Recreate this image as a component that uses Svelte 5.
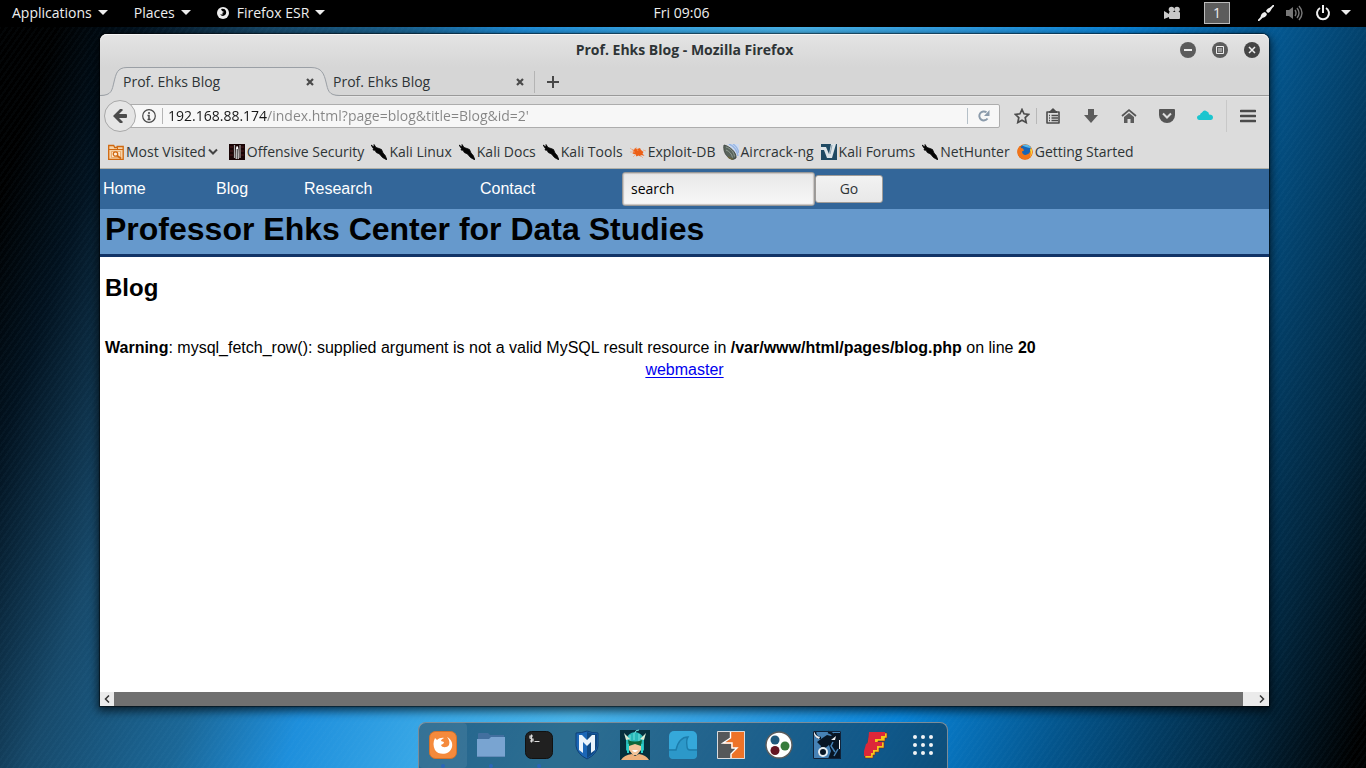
<script>
  let address = $state("192.168.88.174/index.html?page=blog&title=Blog&id=2'");
  let query = $state('search');

  const bookmarks = [
    { label: 'Most Visited', icon: 'folder', menu: true },
    { label: 'Offensive Security', icon: 'offsec' },
    { label: 'Kali Linux', icon: 'kali' },
    { label: 'Kali Docs', icon: 'kali' },
    { label: 'Kali Tools', icon: 'kali' },
    { label: 'Exploit-DB', icon: 'exploit' },
    { label: 'Aircrack-ng', icon: 'aircrack' },
    { label: 'Kali Forums', icon: 'forums' },
    { label: 'NetHunter', icon: 'kali' },
    { label: 'Getting Started', icon: 'firefox' }
  ];

  const pages = ['Home', 'Blog', 'Research', 'Contact'];

  const apps = [
    { id: 'firefox', name: 'Firefox ESR', running: true, active: true },
    { id: 'files', name: 'Files', running: true },
    { id: 'terminal', name: 'Terminal', running: true },
    { id: 'metasploit', name: 'Metasploit' },
    { id: 'armitage', name: 'Armitage' },
    { id: 'wireshark', name: 'Wireshark' },
    { id: 'burp', name: 'Burp Suite' },
    { id: 'maltego', name: 'Maltego' },
    { id: 'beef', name: 'BeEF' },
    { id: 'faraday', name: 'Faraday' },
    { id: 'grid', name: 'Show Applications' }
  ];
</script>

{#snippet caret()}
  <svg width="10" height="5" viewBox="0 0 10 5" aria-hidden="true"><path d="M0 0h10L5 5z" fill="#eee" /></svg>
{/snippet}

{#snippet closeMark()}
  <svg width="8" height="8" viewBox="0 0 8 8" aria-hidden="true"><path d="M1 1l6 6M7 1L1 7" stroke="#4a4a4a" stroke-width="2.2" /></svg>
{/snippet}

{#snippet bookmarkIcon(kind)}
  <svg width="16" height="16" viewBox="0 0 16 16" aria-hidden="true">
    {#if kind === 'folder'}
      <path d="M.7 15.3V1.500h5l1 2h2.500v-1h6v12.800z" fill="#f6d3a8" stroke="#d0680f" stroke-width="1.300" />
      <path d="M1 5.500h14M9.500 3.500v2" stroke="#d0680f" />
      <path d="M3.500 13.500v-6h9v6z" fill="#fae4c8" stroke="#e08a3a" stroke-width=".6" />
      <circle cx="7.500" cy="10" r="2.200" fill="#fff0dd" stroke="#d0680f" stroke-width="1.300" />
      <path d="M9 11.500l4 3" stroke="#d0680f" stroke-width="1.600" />
    {:else if kind === 'offsec'}
      <path d="M0 0h16v16H0z" fill="#190506" />
      <path d="M1 3h3M1 7h3M1 11h3M12 3h3M12 7h3M12 11h3" stroke="#4c1b1c" />
      <path d="M5.500 1v13M11 1v13" stroke="#aaa" stroke-width="1.200" />
      <path d="M8 2c1.500 0 1.700 3 1.700 13H6.700C6.700 5 7 2 8 2z" fill="#fff" />
      <path d="M8.200 5v10" stroke="#222" />
    {:else if kind === 'kali'}
      <path d="M0 1l3 2 0-2.500 2 3 3 1 2.500 1 1.500 3.500 2.200 2.500 1.800 4.500-4.500-2.500-3-3.500-3.200-1.500-1.300-2.300L2 6l.5-1.300z" fill="#050505" stroke="#050505" stroke-width=".8" stroke-linejoin="round" />
    {:else if kind === 'exploit'}
      <path d="M2 5l2 1 1-2 2 1 3-1 1 2 2.500 2-1 1.500 2 2.500-3-1-1 1.500-2-1-2 1-1-2-3-1 1-2z" fill="#ec5f16" />
      <path d="M0 4l4 3M0 8h5M6 3l2 4M13 6l3 1M10 11l3 3M3 13l3-3" stroke="#f2a173" stroke-width=".7" />
    {:else if kind === 'aircrack'}
      <path d="M4 0h12v12z" fill="#cfdcf0" />
      <path d="M6 0c5 2 8 6 9 12M10 0c3 2 5 5 6 9" fill="none" stroke="#98b6e4" stroke-width="1.400" />
      <path d="M1 1c5 1 13 7 12 13q-3 3-7 0C2 11 0 6 1 1z" fill="#59645c" stroke="#38403b" stroke-width=".8" />
      <path d="M3 3c4 1 8 5 8.500 9.500M3 6c3 1 6 4 6.500 7.500" fill="none" stroke="#8f9c92" />
      <path d="M5 13l5 2.500" stroke="#6b653d" stroke-width="1.500" />
    {:else if kind === 'forums'}
      <path d="M0 0h16v16H0z" fill="#1f4a63" />
      <path d="M0 3h5l3 7 2-10h5l-4 14H6L3 6H0z" fill="#dde5e9" />
      <path d="M9 10l2-9" stroke="#8da5b4" />
    {:else}
      <circle cx="8" cy="8" r="7.700" fill="#e66000" />
      <circle cx="8.500" cy="6.500" r="5.800" fill="#1765b8" />
      <path d="M5 1.500c3-2 8-1 9.500 3-2-.500-5-1-9.500-3z" fill="#56b8ea" />
      <path d="M.5 6C1 4 2 3 3 2l1 2 2 .5 1 2-2 1c0 3 3 4 5 3 3-1 4-4 4-7 2 3 2 7-1 10-4 3-10 2-12-3-.5-2-.700-3-.5-4.500z" fill="#f0741a" />
      <path d="M14 4c2 3 1 7-1 9 1-3 1-5 0-7z" fill="#ffd83a" />
    {/if}
  </svg>
{/snippet}

{#snippet appIcon(kind)}
  <svg width="32" height="32" viewBox="0 0 32 32" aria-hidden="true">
    {#if kind === 'firefox'}
      <rect x="2.500" y="2.500" width="27" height="27" rx="6" fill="#f58a3c" stroke="#d5722a" />
      <path d="M8 9l2 2c2-2 5-2.500 7-2-2 1-3 2-3 3l3 1c0 2-2 2-3 3 1 3 6 3 8 0 1-3 0-6-2-8 4 2 6 6 5 10-2 8-13 9-17 3-2-4-2-8 0-12z" fill="#fff" />
    {:else if kind === 'files'}
      <path d="M3 5q0-1 1-1h9l2 2h14v8H3z" fill="#426f9f" />
      <path d="M2 10h12l2-2h14v19q0 1-1 1H3q-1 0-1-1z" fill="#79a4d1" />
      <path d="M2 27.500h28" stroke="#628cba" />
    {:else if kind === 'terminal'}
      <rect x="2.500" y="2.500" width="27" height="27" rx="6" fill="#202020" stroke="#111" />
      <path d="M10 7H7v2l3 1v2H7M8.500 5.500v8M11.500 12.500h5" fill="none" stroke="#ddd" stroke-width="1.200" />
    {:else if kind === 'metasploit'}
      <path d="M5 4q6 0 11-2 5 2 11 2v13q-1 8-11 13Q6 25 5 17z" fill="#1b66b6" stroke="#0f4077" />
      <path d="M16 3q5 2 10 2v12q-1 7-10 12z" fill="#104982" />
      <path d="M8 21V6l3 0 5 5 5-5 3 0v15l-4 3V13l-4 4-4-4v11z" fill="#eaf3fb" />
    {:else if kind === 'armitage'}
      <path d="M1 1h30v30H1z" fill="#052f3c" />
      <path d="M7 22V10q2-6 9-7 7 1 9 7v12l-4-4H11z" fill="#28b9b8" />
      <path d="M16 4q0-3 4-3M11 6v6M15 4v7M20 5v7" fill="none" stroke="#73e1dc" />
      <path d="M5 4l6 6-4 1zM27 4l-6 6 4 1z" fill="#d8ebd3" />
      <path d="M10 13h12v8l-4 5h-4l-4-5z" fill="#f3c49a" />
      <path d="M9 11q7 3 14 0l-1 6-6-2-6 2z" fill="#0c6638" />
      <path d="M13 21h6l-2 2h-2z" fill="#fff" />
      <path d="M2 31q3-5 11-6l3 2 4-2q7 1 10 6z" fill="#efb27d" />
      <path d="M9 15l0 9M23 15l0 9" stroke="#2ad0c8" stroke-width="2" />
    {:else if kind === 'wireshark'}
      <rect x="2" y="2" width="28" height="28" rx="5" fill="#35a8da" />
      <path d="M2 20h7q3-12 12-12-2 3-1 9 0 3 3 3h7v6q0 4-4 4H6q-4 0-4-4z" fill="#2c98c9" />
      <path d="M2 21h7q3-13 12-13-2 3-1 9 0 4 3 4h7" fill="none" stroke="#1c7cab" stroke-width="1.400" />
    {:else if kind === 'burp'}
      <path d="M2 2h28v28H2z" fill="#55585a" />
      <path d="M15 2h15v28H16v-5l6-6h-6v-4H8l8-6z" fill="#ed7328" />
      <path d="M15.500 2v7L8 14h9v5h5l-6 6v5" fill="none" stroke="#fff" stroke-width="1.400" />
      <path d="M2.500 2.500h27v27h-27z" fill="none" stroke="#d9dcdf" />
    {:else if kind === 'maltego'}
      <circle cx="16" cy="16" r="13" fill="#fff" stroke="#5b5b5b" stroke-width="1.400" />
      <circle cx="12" cy="11" r="4.500" fill="#20597c" />
      <circle cx="22" cy="17" r="4.500" fill="#377b3c" />
      <circle cx="12" cy="21.500" r="4.500" fill="#641522" />
    {:else if kind === 'beef'}
      <path d="M2 2h28v28H2z" fill="#4682b6" />
      <path d="M10 10l6-4 4 1 3-3h7v26H17l3-8-2-6-5 4-2 6-4-1 3-8-4-4z" fill="#071524" />
      <path d="M4 3q0 6 6 6M17 3q5 1 7 6" fill="none" stroke="#071524" stroke-width="2.500" />
      <path d="M3 2q1 5 6 6L8 10Q2 8 3 2zM20 11l5-4-1 4zM28 11h2v9h-2z" fill="#f0f3f6" />
      <circle cx="12" cy="23" r="4" fill="#071524" stroke="#e8eef2" stroke-width="2" />
      <path d="M22 13l-2 4 4 6M27 20l-4 7" fill="none" stroke="#4682b6" stroke-width="1.500" />
      <path d="M2.500 2.500h27v27h-27z" fill="none" stroke="#10233a" />
    {:else if kind === 'faraday'}
      <path d="M11 4h17v5h-2v3h-7v1h6v6h-5v4h-4v3h-2v3H6v-4z" fill="#f4c61b" stroke="#8a1c22" stroke-width=".6" />
      <path d="M10 3h16v4h-4v3h-6v3h7v4h-5v4h-4v3h-2v3H5v-5l2-7 2-1z" fill="#dd2739" />
    {:else}
      <g fill="#f2f4f5">
        {#each [8, 16, 24] as cy}
          {#each [8, 16, 24] as cx}
            <circle {cx} {cy} r="2" />
          {/each}
        {/each}
      </g>
    {/if}
  </svg>
{/snippet}

<div class="desktop">
  <header class="panel">
    <nav class="panel-menus" aria-label="System menus">
      <button>Applications {@render caret()}</button>
      <button>Places {@render caret()}</button>
      <button>
        <svg class="app-mark" width="12" height="12" viewBox="0 0 12 12" aria-hidden="true">
          <circle cx="6" cy="6" r="6" fill="#eee" />
          <path d="M4 2q4-1 5 2 1 4-3 5-2 0-3-2 2 1 3 0l-1-1 2-1-2-1z" fill="#000" />
        </svg>
        Firefox ESR {@render caret()}
      </button>
    </nav>
    <button class="clock">Fri 09:06</button>
    <div class="tray">
      <svg class="camera" width="17" height="14" viewBox="0 0 17 14" aria-hidden="true">
        <g fill="#c9c9c9"><circle cx="7.500" cy="3.500" r="2.800" /><circle cx="13" cy="3.500" r="2.800" /><rect x="5" y="6" width="11" height="7" rx="1" /><path d="M0 5l5 3v3l-5 2z" /></g>
      </svg>
      <button class="workspace" aria-label="Workspace 1">1</button>
      <svg class="plug" width="16" height="16" viewBox="0 0 16 16" aria-hidden="true">
        <path d="M0 16l4-4M12 4l4-4" stroke="#eee" stroke-width="1.800" />
        <path d="M2.500 13q0-5 4.500-6l2 2q-1 4-6.500 4zM8 6q1-3 6-4-1 5-4 6z" fill="#eee" />
      </svg>
      <svg class="sound" width="17" height="16" viewBox="0 0 17 16" aria-hidden="true">
        <path d="M0 5h3l4-3v12l-4-3H0z" fill="#777" />
        <path d="M9 5q2 3 0 6M11 3q4 5 0 10M13 1q6 7 0 14" fill="none" stroke="#777" stroke-width="1.400" />
      </svg>
      <svg class="power" width="16" height="16" viewBox="0 0 16 16" aria-hidden="true">
        <path d="M5 3a6 6 0 1 0 6 0M8 0v8" fill="none" stroke="#eee" stroke-width="2" />
      </svg>
      {@render caret()}
    </div>
  </header>

  <section class="window">
    <div class="titlebar">
      <strong>Prof. Ehks Blog - Mozilla Firefox</strong>
      <div class="controls">
        <button aria-label="Minimize"><svg width="16" height="16" viewBox="0 0 16 16"><circle cx="8" cy="8" r="8" fill="#5c5c5c" /><path d="M4 8h8" stroke="#eee" stroke-width="2" /></svg></button>
        <button aria-label="Maximize"><svg width="16" height="16" viewBox="0 0 16 16"><circle cx="8" cy="8" r="8" fill="#5c5c5c" /><path d="M4.500 4.500h7v7h-7z" fill="none" stroke="#eee" /><path d="M6 6h4v4H6z" fill="#999" /></svg></button>
        <button aria-label="Close window"><svg width="16" height="16" viewBox="0 0 16 16"><circle cx="8" cy="8" r="8" fill="#454545" /><path d="M5 5l6 6M11 5l-6 6" stroke="#eee" stroke-width="1.500" /></svg></button>
      </div>
    </div>

    <div class="tabs">
      <div class="tab active">
        <svg class="tab-shape" width="240" height="30" viewBox="0 0 240 30" aria-hidden="true">
          <path d="M0 28.500C12 28.500 12 23 14 15S17 .5 27 .5H211C222 .5 224 7 226 15S228 28.500 240 28.500V30H0z" fill="#dcdcdc" />
          <path d="M0 28.500C12 28.500 12 23 14 15S17 .5 27 .5H211C222 .5 224 7 226 15S228 28.500 240 28.500" fill="none" stroke="#9a9fa5" />
        </svg>
        <button class="tab-name">Prof. Ehks Blog</button>
        <button class="close" aria-label="Close tab">{@render closeMark()}</button>
      </div>
      <div class="tab">
        <button class="tab-name">Prof. Ehks Blog</button>
        <button class="close" aria-label="Close tab">{@render closeMark()}</button>
      </div>
      <button class="new-tab" aria-label="New tab"><svg width="12" height="12" viewBox="0 0 12 12"><path d="M0 6h12M6 0v12" stroke="#484848" stroke-width="2" /></svg></button>
    </div>

    <div class="toolbar">
      <button class="back" aria-label="Back"><svg width="14" height="14" viewBox="0 0 14 14"><path d="M7 0h2l1 1-4 4h7q1 0 1 1v2q0 1-1 1H6l4 4-1 1H7L0 7z" fill="#4b4b4b" /></svg></button>
      <div class="urlbar">
        <svg width="14" height="14" viewBox="0 0 14 14" aria-hidden="true"><circle cx="7" cy="7" r="6.300" fill="none" stroke="#484848" stroke-width="1.200" /><path d="M7 3v2M5.500 6.500H7V11M5.500 10.500h3" fill="none" stroke="#484848" stroke-width="1.500" /></svg>
        <span class="rule"></span>
        <input class="address" aria-label="Address" bind:value={address} />
        <button class="reload" aria-label="Reload"><svg width="12" height="12" viewBox="0 0 12 12"><path d="M9.500 8.500A4.500 4.500 0 1 1 8.500 2.300" fill="none" stroke="#8b9bab" stroke-width="2" /><path d="M11.500 0v6H6z" fill="#8b9bab" /></svg></button>
      </div>
      <div class="tools">
        <button class="star" aria-label="Bookmark this page"><svg width="16" height="16" viewBox="0 0 16 16"><path d="M8 1.500l2 4.300 4.700.600-3.500 3.200 1 4.900L8 12.200l-4.200 2.300 1-4.900L1.300 6.400 6 5.800z" fill="none" stroke="#4b4b4b" stroke-width="1.700" /></svg></button>
        <button aria-label="Bookmarks list"><svg width="16" height="16" viewBox="0 0 16 16"><path d="M2 4h3l3-3 3 3h3v11H2z" fill="none" stroke="#4b4b4b" stroke-width="1.600" stroke-linejoin="round" /><path d="M4 4h8" stroke="#4b4b4b" stroke-width="2" /><path d="M4 7.500h1M6.500 7.500H13M4 10h1M6.500 10H13M4 12.500h1M6.500 12.500H13" stroke="#4b4b4b" stroke-width="1.300" /></svg></button>
        <button aria-label="Downloads"><svg width="16" height="16" viewBox="0 0 16 16"><path d="M5 1h6v6h4l-7 8-7-8h4z" fill="#5c5c5c" /></svg></button>
        <button aria-label="Home page"><svg width="16" height="16" viewBox="0 0 16 16"><path d="M1 8l7-6 7 6" fill="none" stroke="#555" stroke-width="1.700" /><path d="M3 9l5-4 5 4v6H9.500v-4h-3v4H3z" fill="#5c5c5c" /></svg></button>
        <button aria-label="Pocket"><svg width="16" height="16" viewBox="0 0 16 16"><path d="M1 1h14q1 0 1 1v5a8 8 0 0 1-16 0V2q0-1 1-1z" fill="#555" /><path d="M4 5.500l4 4 4-4" fill="none" stroke="#ddd" stroke-width="2" /></svg></button>
        <button aria-label="Cloud"><svg width="16" height="16" viewBox="0 0 16 16"><path d="M2 12q-2-.500-2-2.500T3 7q0-2 2-2.500Q7 1 10 3.500q2 .500 2 3 4 0 4 3 0 2-2 2.500z" fill="#1bc5cf" /></svg></button>
        <button class="menu" aria-label="Menu"><svg width="16" height="14" viewBox="0 0 16 14"><path d="M1 2h14M1 7h14M1 12h14" stroke="#4b4b4b" stroke-width="2.600" stroke-linecap="round" /></svg></button>
      </div>
    </div>

    <nav class="bookmarks" aria-label="Bookmarks">
      {#each bookmarks as mark}
        <button>
          {@render bookmarkIcon(mark.icon)}<span>{mark.label}</span>
          {#if mark.menu}
            <svg class="more" width="10" height="8" viewBox="0 0 10 8" aria-hidden="true"><path d="M1 1.500l4 4 4-4" fill="none" stroke="#444" stroke-width="2" /></svg>
          {/if}
        </button>
      {/each}
    </nav>

    <main class="page">
      <nav class="site-nav" aria-label="Site">
        {#each pages as page}
          <a href={'#' + page.toLowerCase()}>{page}</a>
        {/each}
        <form onsubmit={(event) => event.preventDefault()}>
          <input aria-label="Search" bind:value={query} />
          <button>Go</button>
        </form>
      </nav>
      <h1>Professor Ehks Center for Data Studies</h1>
      <article>
        <h2>Blog</h2>
        <p><b>Warning</b>: mysql_fetch_row(): supplied argument is not a valid MySQL result resource in <b>/var/www/html/pages/blog.php</b> on line <b>20</b></p>
        <footer><a href="#webmaster">webmaster</a></footer>
      </article>
    </main>

    <div class="scrollbar">
      <button aria-label="Scroll left"><svg width="6" height="8" viewBox="0 0 6 8"><path d="M5 .5L1.500 4 5 7.500" fill="none" stroke="#333" stroke-width="1.500" /></svg></button>
      <div class="thumb"></div>
      <button aria-label="Scroll right"><svg width="6" height="8" viewBox="0 0 6 8"><path d="M1 .5L4.500 4 1 7.500" fill="none" stroke="#333" stroke-width="1.500" /></svg></button>
    </div>
  </section>

  <nav class="dock" aria-label="Dock">
    {#each apps as app}
      <button class:active={app.active} class:running={app.running} aria-label={app.name}>{@render appIcon(app.id)}</button>
    {/each}
  </nav>
</div>

<style>
  :global(body) {
    margin: 0;
    background: #000;
  }

  .desktop {
    box-sizing: border-box;
    min-height: 100vh;
    display: flex;
    flex-direction: column;
    color: #2e3436;
    font: 14px/20px "Open Sans", "Noto Sans", sans-serif;
    background:
      repeating-linear-gradient(125deg, rgba(120, 190, 230, 0.03) 0 2px, transparent 2px 5px),
      linear-gradient(108deg, #000 4%, #02121f 9%, #17496a 17%, #1b6797 26%, #1e8fdc 33%, #38a7e6 41%, #4ab6ec 50%, #2f9ee4 60%, #0985da 70%, #04568e 80%, #02253c 92%, #000 99%);
  }

  button {
    display: flex;
    align-items: center;
    justify-content: center;
    margin: 0;
    padding: 0;
    border: 0;
    background: none;
    color: inherit;
    font: inherit;
    white-space: nowrap;
  }

  svg {
    display: block;
    flex: none;
  }

  .panel {
    display: grid;
    grid-template-columns: 1fr auto 1fr;
    align-items: center;
    box-sizing: border-box;
    height: 27px;
    padding: 0 15px 2px 12px;
    background: #000;
    color: #eee;
  }

  .panel-menus {
    display: flex;
    gap: 26px;
  }

  .panel-menus button {
    gap: 6px;
  }

  .panel-menus .app-mark {
    margin-right: 2px;
  }

  .tray {
    display: flex;
    align-items: center;
    justify-content: flex-end;
  }

  .workspace {
    width: 26px;
    height: 22px;
    margin: 0 28px 0 23px;
    border: 1px solid #bbb;
    background: #5c5c5c;
  }

  .sound {
    margin: 0 12px;
  }

  .power {
    margin-right: 10px;
  }

  .window {
    flex: 1;
    display: flex;
    flex-direction: column;
    margin: 7px 97px 16px 100px;
    border-radius: 7px 7px 0 0;
    background: #dcdcdc;
    box-shadow: 0 0 1px 1px rgba(0, 0, 0, 0.5), 0 3px 10px 2px rgba(0, 0, 0, 0.65);
  }

  .titlebar {
    display: grid;
    grid-template-columns: 1fr auto 1fr;
    align-items: center;
    box-sizing: border-box;
    height: 33px;
    padding: 0 9px 2px;
    border-radius: 7px 7px 0 0;
    background: linear-gradient(#e4e4e4, #d6d6d6);
    box-shadow: inset 0 1px #f6f6f6;
  }

  .titlebar strong {
    grid-column: 2;
  }

  .controls {
    display: flex;
    gap: 16px;
    justify-content: flex-end;
  }

  .tabs {
    display: flex;
    height: 29px;
    border-bottom: 1px solid #999;
    background: #d6d6d6;
    box-sizing: border-box;
  }

  .tab {
    position: relative;
    display: flex;
    flex: 0 1 210px;
    align-items: center;
    justify-content: space-between;
    box-sizing: border-box;
    padding: 2px 10px 0 9px;
  }

  .tab.active {
    flex-basis: 224px;
    padding-left: 23px;
  }

  .tab-shape {
    position: absolute;
    left: 0;
    top: 0;
  }

  .tab-name,
  .close {
    position: relative;
  }

  .new-tab {
    width: 36px;
    margin: 4px 0 2px;
    border-left: 1px solid #b4b4b4;
  }

  .toolbar {
    display: flex;
    align-items: center;
    height: 40px;
    padding: 0 13px 1px 4px;
    border-top: 1px solid #e6e6e6;
    box-sizing: border-box;
  }

  .back {
    position: relative;
    box-sizing: border-box;
    width: 32px;
    height: 32px;
    border: 1px solid #a8a8a8;
    border-radius: 50%;
    background: #e5e5e5;
  }

  .urlbar {
    flex: 1;
    display: flex;
    align-items: center;
    box-sizing: border-box;
    height: 24px;
    margin-left: -7px;
    padding-left: 12px;
    border: 1px solid #adadad;
    border-radius: 0 2px 2px 0;
    background: #f7f7f7;
  }

  .rule {
    width: 1px;
    height: 16px;
    margin-left: 6px;
    background: #b5b5b5;
  }

  .address {
    flex: 1;
    min-width: 0;
    height: 22px;
    padding: 0 0 2px 5px;
    box-sizing: border-box;
    border: 0;
    outline: 0;
    background: linear-gradient(90deg, #161616 104px, #858585 104px);
    background-clip: text;
    color: transparent;
    font: inherit;
    line-height: 20px;
  }

  .reload {
    width: 32px;
    height: 16px;
    border-left: 1px solid #b5c0c8;
  }

  .tools {
    display: flex;
    gap: 22px;
    margin-left: 15px;
  }

  .tools .star {
    width: 22px;
    margin-right: -22px;
    padding-right: 7px;
    border-right: 1px solid #b8b8b8;
  }

  .tools .star + button {
    margin-left: 8px;
  }

  .tools .menu {
    height: 32px;
    margin: -8px 0 -8px -9px;
    padding-left: 13px;
    border-left: 1px solid #c8c8c8;
  }

  .bookmarks {
    display: flex;
    align-items: center;
    gap: 7px;
    height: 33px;
    padding-left: 8px;
    border-bottom: 1px solid #b0b0a8;
    box-sizing: border-box;
  }

  .bookmarks button {
    gap: 2px;
  }

  .more {
    margin-right: 4px;
  }

  .page {
    flex: 1;
    background: #fff;
    color: #000;
    font: 16px/18px "Liberation Sans", Arial, sans-serif;
  }

  .site-nav {
    display: grid;
    grid-template-columns: 113px 88px 176px 142px 1fr;
    align-items: center;
    height: 40px;
    padding-left: 3px;
    background: #336699;
  }

  .site-nav a {
    color: #fff;
    text-decoration: none;
  }

  form {
    display: flex;
    align-items: center;
    font: 14px/20px "Open Sans", "Noto Sans", sans-serif;
  }

  form input {
    box-sizing: border-box;
    width: 193px;
    height: 34px;
    padding: 0 8px 2px;
    border: 1px solid #999;
    border-radius: 3px;
    background: linear-gradient(#e8e8e8, #f8f8f8);
    box-shadow: inset 0 0 1px 1px #c8c4c0;
    color: #000;
    font: inherit;
  }

  form button {
    box-sizing: border-box;
    width: 68px;
    height: 28px;
    border: 1px solid #a09c98;
    border-radius: 3px;
    background: linear-gradient(#f2f2f2, #e8e8e8);
    color: #2e3436;
  }

  h1 {
    margin: 0;
    padding: 2px 5px 7px;
    border-bottom: 3px solid #113366;
    background: #6699cc;
    font-size: 32px;
    line-height: 36px;
  }

  article {
    padding: 17px 5px;
  }

  h2 {
    margin: 0 0 37px;
    font-size: 24px;
    line-height: 28px;
  }

  p {
    margin: 0 0 4px;
  }

  footer {
    text-align: center;
  }

  footer a {
    color: #0000ee;
    text-underline-offset: 2px;
    text-decoration-skip-ink: none;
  }

  .scrollbar {
    display: flex;
    height: 14px;
    background: #ebebeb;
  }

  .scrollbar button {
    width: 14px;
  }

  .thumb {
    flex: 1;
    margin-right: 12px;
    background: #707070;
  }

  .dock {
    display: flex;
    align-self: center;
    box-sizing: border-box;
    height: 46px;
    border: 1px solid #7c8c98;
    border-bottom: 0;
    border-radius: 8px 8px 0 0;
    background: rgba(20, 50, 70, 0.55);
  }

  .dock button {
    position: relative;
    width: 48px;
    padding-bottom: 1px;
  }

  .dock .active {
    border-radius: 4px;
    background: rgba(255, 255, 255, 0.08);
  }

  .dock .running::after {
    content: "";
    position: absolute;
    bottom: 0;
    width: 4px;
    height: 4px;
    border-radius: 50%;
    background: #2a66b8;
  }
</style>
